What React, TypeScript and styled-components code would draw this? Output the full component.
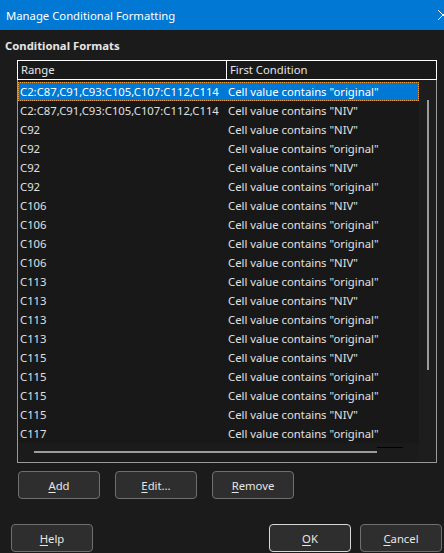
import React from "react";
import styled, { createGlobalStyle } from "styled-components";

const GlobalStyle = createGlobalStyle`
  html, body {
    margin: 0;
    padding: 0;
    background: #1b1b1b;
  }
  body {
    font-family: "Noto Sans", "Open Sans", sans-serif;
    font-size: 11.3px;
    color: #e6e6e6;
  }
`;

const Window = styled.div`
  width: 444px;
  height: 553px;
  display: flex;
  flex-direction: column;
  background: #1b1b1b;
  overflow: hidden;
`;

const TitleBar = styled.div`
  height: 30px;
  flex: none;
  background: #0078d4;
  color: #ffffff;
  display: flex;
  align-items: center;
  justify-content: space-between;
  padding-left: 6px;
  font-size: 11.3px;
  overflow: hidden;
`;

const CloseGlyph = styled.svg`
  flex: none;
  margin-right: -5px;
`;

const Body = styled.div`
  flex: 1;
  display: flex;
  flex-direction: column;
  padding: 9px 0 0 0;
`;

const SectionLabel = styled.div`
  font-weight: 700;
  font-size: 11.3px;
  padding-left: 5px;
  height: 14px;
  line-height: 14px;
`;

const ListBox = styled.div`
  margin: 7px 0 0 17px;
  width: 420px;
  height: 403px;
  box-sizing: border-box;
  border: 1px solid #9a9a9a;
  border-top: none;
  display: flex;
  flex-direction: column;
`;

const Header = styled.div`
  height: 20px;
  margin: 0 -1px;
  box-sizing: border-box;
  border: 1px solid #ffffff;
  display: grid;
  grid-template-columns: 209px 1fr;
  background: #191919;
`;

const HeaderCell = styled.div<{ $divider?: boolean }>`
  padding-left: 3px;
  line-height: 18px;
  color: #e6e6e6;
  border-right: ${({ $divider }) => ($divider ? "1px solid #ffffff" : "none")};
`;

const ListArea = styled.div`
  flex: 1;
  display: flex;
  min-height: 0;
`;

const RowsColumn = styled.div`
  width: 401px;
  display: flex;
  flex-direction: column;
  padding-top: 2px;
  position: relative;
`;

const Row = styled.div<{ $selected?: boolean }>`
  height: 19px;
  box-sizing: border-box;
  display: grid;
  grid-template-columns: 201px 1fr;
  align-items: center;
  background: ${({ $selected }) => ($selected ? "#0078d4" : "#181818")};
  outline: ${({ $selected }) => ($selected ? "1px dotted #f0a040" : "none")};
  outline-offset: -1px;
  color: ${({ $selected }) => ($selected ? "#ffffff" : "#e0e0e0")};
`;

const RangeCell = styled.div`
  padding-left: 2px;
  white-space: nowrap;
  overflow: hidden;
  text-overflow: clip;
  line-height: 19px;
`;

const CondCell = styled.div`
  padding-left: 9px;
  white-space: nowrap;
  line-height: 19px;
`;

const HScroll = styled.div`
  margin: 8px 0 0 16px;
  width: 343px;
  height: 2px;
  background: #9c9c9c;
`;

const StrayMark = styled.div`
  position: absolute;
  left: 359px;
  bottom: 14px;
  width: 26px;
  height: 1px;
  background: #000000;
`;

const Track = styled.div`
  flex: 1;
  background: #1d1d1d;
  display: flex;
  justify-content: center;
  padding-top: 20px;
`;

const Thumb = styled.div`
  width: 2px;
  height: 270px;
  background: #9c9c9c;
`;

const ButtonRow = styled.div<{ $left: number; $top: number; $gap: number }>`
  display: flex;
  gap: ${({ $gap }) => $gap}px;
  padding-left: ${({ $left }) => $left}px;
  margin-top: ${({ $top }) => $top}px;
`;

const Spacer = styled.div`
  flex: 1;
`;

const Button = styled.button<{ $primary?: boolean }>`
  width: 82px;
  height: 28px;
  box-sizing: border-box;
  border-radius: 4px;
  border: 1px solid ${({ $primary }) => ($primary ? "#d8d8d8" : "#6f6f6f")};
  background: #2e2e2e;
  color: #e6e6e6;
  font-family: "Noto Sans", "Open Sans", sans-serif;
  font-size: 11.3px;
  padding: 0;
  cursor: default;

  u {
    text-underline-offset: 2px;
  }
`;

type Rule = { range: string; cond: string };

const LONG = "C2:C87,C91,C93:C105,C107:C112,C114,C115:C116,C118";

const rules: Rule[] = [
  { range: LONG, cond: "original" },
  { range: LONG, cond: "NIV" },
  { range: "C92", cond: "NIV" },
  { range: "C92", cond: "original" },
  { range: "C92", cond: "NIV" },
  { range: "C92", cond: "original" },
  { range: "C106", cond: "NIV" },
  { range: "C106", cond: "original" },
  { range: "C106", cond: "original" },
  { range: "C106", cond: "NIV" },
  { range: "C113", cond: "original" },
  { range: "C113", cond: "NIV" },
  { range: "C113", cond: "original" },
  { range: "C113", cond: "original" },
  { range: "C115", cond: "NIV" },
  { range: "C115", cond: "original" },
  { range: "C115", cond: "original" },
  { range: "C115", cond: "NIV" },
  { range: "C117", cond: "original" },
];

const Mnemonic: React.FC<{ label: string; at: number }> = ({ label, at }) => (
  <>
    {label.slice(0, at)}
    <u>{label[at]}</u>
    {label.slice(at + 1)}
  </>
);

export default function App() {
  return (
    <Window>
      <GlobalStyle />
      <TitleBar>
        <span>Manage Conditional Formatting</span>
        <CloseGlyph width="12" height="12" viewBox="0 0 12 12">
          <path d="M1 1 L11 11 M11 1 L1 11" stroke="#ffffff" strokeWidth="1" />
        </CloseGlyph>
      </TitleBar>
      <Body>
        <SectionLabel>Conditional Formats</SectionLabel>
        <ListBox>
          <Header>
            <HeaderCell $divider>Range</HeaderCell>
            <HeaderCell>First Condition</HeaderCell>
          </Header>
          <ListArea>
            <RowsColumn>
              {rules.map((r, i) => (
                <Row key={i} $selected={i === 0}>
                  <RangeCell>{r.range}</RangeCell>
                  <CondCell>Cell value contains "{r.cond}"</CondCell>
                </Row>
              ))}
              <HScroll />
              <StrayMark />
            </RowsColumn>
            <Track>
              <Thumb />
            </Track>
          </ListArea>
        </ListBox>
        <ButtonRow $left={18} $top={8} $gap={15}>
          <Button>
            <Mnemonic label="Add" at={0} />
          </Button>
          <Button>
            <Mnemonic label="Edit..." at={0} />
          </Button>
          <Button>
            <Mnemonic label="Remove" at={0} />
          </Button>
        </ButtonRow>
        <ButtonRow $left={11} $top={25} $gap={9}>
          <Button>
            <Mnemonic label="Help" at={0} />
          </Button>
          <Spacer />
          <Button $primary>
            <Mnemonic label="OK" at={0} />
          </Button>
          <Button style={{ marginRight: 2 }}>
            <Mnemonic label="Cancel" at={0} />
          </Button>
        </ButtonRow>
      </Body>
    </Window>
  );
}
